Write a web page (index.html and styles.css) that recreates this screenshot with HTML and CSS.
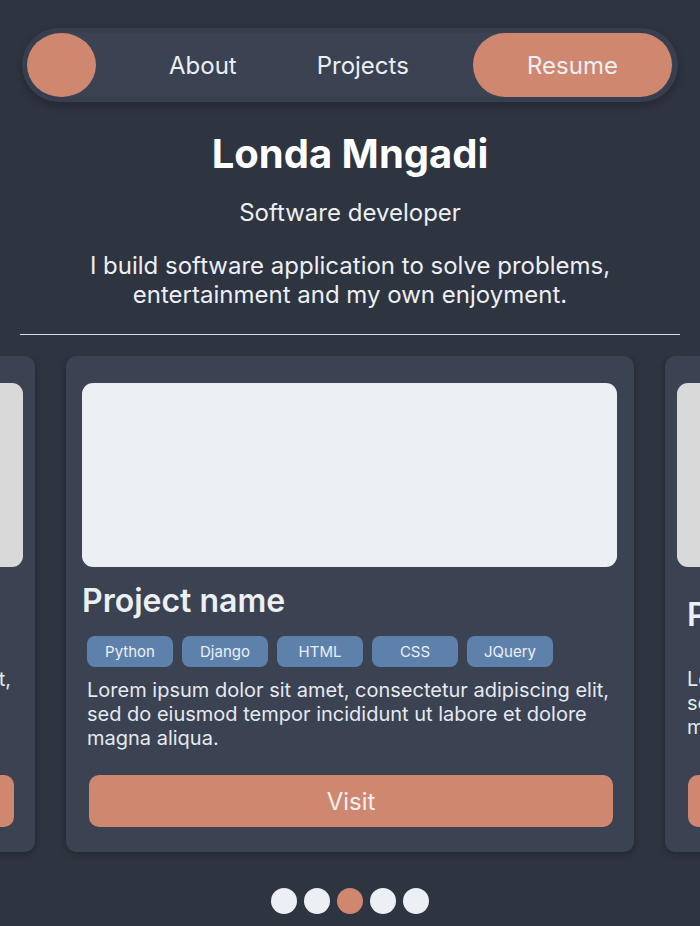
FILE: index.html
```html
<!DOCTYPE html>
<html lang="en">
<head>
<meta charset="utf-8">
<title>Londa Mngadi</title>
<link rel="stylesheet" href="styles.css">
</head>
<body>
<header class="nav">
  <a class="nav-logo" href="#"></a>
  <a class="nav-link nav-about" href="#">About</a>
  <a class="nav-link nav-projects" href="#">Projects</a>
  <a class="nav-resume" href="#">Resume</a>
</header>

<section class="hero">
  <h1 class="hero-name">Londa Mngadi</h1>
  <p class="hero-role">Software developer</p>
  <p class="hero-bio">I build software application to solve problems,<br>entertainment and my own enjoyment.</p>
</section>

<hr class="divider">

<section class="carousel">
  <article class="card card-side">
    <div class="card-image card-image-side"></div>
    <h2 class="card-title">Project name</h2>
    <p class="card-desc">Lorem ipsum dolor sit amet, consectetur adipiscing elit, sed do eiusmod tempor incididunt ut labore et dolore magna aliqua.</p>
    <a class="card-visit" href="#">Visit</a>
  </article>
  <article class="card">
    <div class="card-image"></div>
    <h2 class="card-title">Project name</h2>
    <ul class="card-tags">
      <li class="tag">Python</li>
      <li class="tag">Django</li>
      <li class="tag">HTML</li>
      <li class="tag">CSS</li>
      <li class="tag">JQuery</li>
    </ul>
    <p class="card-desc">Lorem ipsum dolor sit amet, consectetur adipiscing elit, sed do eiusmod tempor incididunt ut labore et dolore magna aliqua.</p>
    <a class="card-visit" href="#">Visit</a>
  </article>
  <article class="card card-side">
    <div class="card-image card-image-side"></div>
    <h2 class="card-title">Project name</h2>
    <p class="card-desc">Lorem ipsum dolor sit amet, consectetur adipiscing elit, sed do eiusmod tempor incididunt ut labore et dolore magna aliqua.</p>
    <a class="card-visit" href="#">Visit</a>
  </article>
</section>

<nav class="dots">
  <span class="dot"></span>
  <span class="dot"></span>
  <span class="dot dot-active"></span>
  <span class="dot"></span>
  <span class="dot"></span>
</nav>
</body>
</html>
```

FILE: styles.css
```css
* {
  box-sizing: border-box;
}

html, body {
  margin: 0;
  padding: 0;
}

body {
  background: #2e3440;
  color: #eceff4;
  font-family: "Inter", "Noto Sans", "Liberation Sans", sans-serif;
  width: 700px;
  height: 926px;
  overflow: hidden;
}

a {
  color: inherit;
  text-decoration: none;
}

/* NAV */
.nav {
  margin: 28px 22px 0 22px;
  height: 74px;
  border: 5px solid #373e4d;
  border-radius: 37px;
  background: #3b4252;
  box-shadow: 0 4px 8px rgba(0, 0, 0, 0.22);
  display: flex;
  align-items: center;
  padding-right: 1px;
}

.nav-logo {
  width: 69px;
  height: 64px;
  border-radius: 50%;
  background: #d08770;
  flex-shrink: 0;
}

.nav-link {
  font-size: 24px;
  line-height: 29px;
  color: #eceff4;
}

.nav-about {
  margin-left: 73px;
}

.nav-projects {
  margin-left: 80px;
}

.nav-resume {
  margin-left: auto;
  width: 199px;
  height: 64px;
  border-radius: 32px;
  background: #d08770;
  display: flex;
  align-items: center;
  justify-content: center;
  font-size: 24px;
  color: #eceff4;
}

/* HERO */
.hero {
  text-align: center;
  padding-top: 28px;
}

.hero-name {
  margin: 0;
  font-size: 40px;
  line-height: 48px;
  font-weight: 700;
  color: #ffffff;
}

.hero-role {
  margin: 20px 0 0 0;
  font-size: 24px;
  line-height: 29px;
}

.hero-bio {
  margin: 24px 0 0 0;
  font-size: 24px;
  line-height: 29px;
}

.divider {
  margin: 25px 20px 0 20px;
  border: 0;
  height: 1px;
  background: #d8dee9;
}

/* CAROUSEL */
.carousel {
  margin-top: 21px;
  display: flex;
  justify-content: center;
  gap: 31px;
  overflow: hidden;
  padding-bottom: 10px;
}

.card {
  flex: 0 0 568px;
  height: 496px;
  background: #3b4252;
  border-radius: 10px;
  box-shadow: 0 2px 6px rgba(0, 0, 0, 0.28);
  padding: 27px 17px 25px 16px;
  display: flex;
  flex-direction: column;
}

.card-image {
  height: 184px;
  border-radius: 11px;
  background: #eceff4;
  flex-shrink: 0;
}

.card-title {
  margin: 14px 0 0 0;
  font-size: 32px;
  line-height: 39px;
  font-weight: 600;
  color: #eceff4;
}

.card-tags {
  list-style: none;
  margin: 16px 0 0 5px;
  padding: 0;
  display: flex;
  gap: 9px;
}

.tag {
  width: 86px;
  height: 31px;
  border-radius: 8px;
  background: #5e81ac;
  font-size: 15px;
  display: flex;
  align-items: center;
  justify-content: center;
  color: #eceff4;
}

.card-desc {
  margin: 11px 0 0 5px;
  font-size: 20px;
  line-height: 24px;
  color: #e5e9f0;
}

.card-visit {
  margin: auto 4px 0 7px;
  height: 52px;
  border-radius: 10px;
  background: #d08770;
  display: flex;
  align-items: center;
  justify-content: center;
  font-size: 24px;
  color: #eceff4;
}

/* side cards */
.card-side {
  padding: 27px 12px 25px 12px;
}

.card-image-side {
  background: #d9d9d9;
}

.card-side .card-title {
  margin: 28px 0 0 10px;
}

.card-side .card-desc {
  margin: 33px 0 0 10px;
}

.card-side .card-visit {
  margin: auto 9px 0 11px;
}

/* DOTS */
.dots {
  margin-top: 26px;
  display: flex;
  justify-content: center;
  gap: 7px;
}

.dot {
  width: 26px;
  height: 26px;
  border-radius: 50%;
  background: #eceff4;
}

.dot-active {
  background: #d08770;
}
```
